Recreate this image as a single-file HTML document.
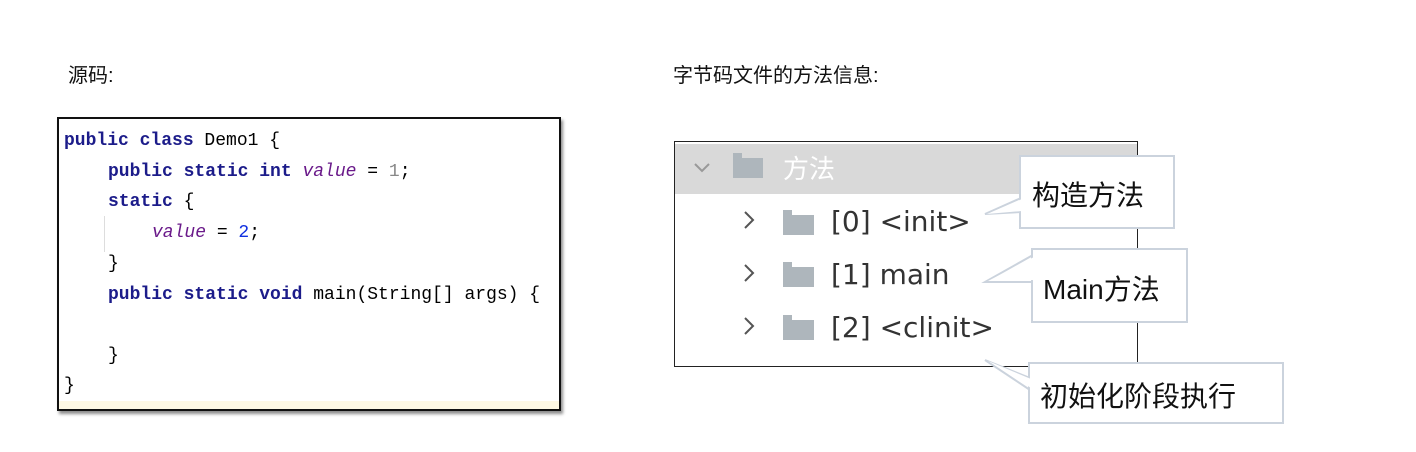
<!DOCTYPE html>
<html><head><meta charset="utf-8"><style>
body{margin:0;width:1416px;height:452px;background:#fff;position:relative;overflow:hidden;font-family:"Liberation Sans","Noto Sans CJK SC",sans-serif;}
.abs{position:absolute;}
.lbl{font-size:20px;color:#111;line-height:24px;}
.code{left:57px;top:117px;width:500px;height:290px;border:2px solid #111;box-shadow:2px 3px 3px rgba(0,0,0,.45);background:#fff;}
.ln{position:absolute;font-family:"Liberation Mono",monospace;font-size:18px;line-height:20px;white-space:pre;color:#000;}
.k{color:#1c1c8a;font-weight:bold;}
.v{color:#6a1a8a;font-style:italic;}
.n{color:#888;}
.b{color:#1030e0;}
.tree{left:674px;top:141px;width:462px;height:224px;border:1.5px solid #222;background:#fff;}
.hdr{left:0;top:2px;width:462px;height:50px;background:#d9d9d9;}
.row{position:absolute;font-size:28px;color:#333;line-height:32px;font-family:"DejaVu Sans","Noto Sans CJK SC",sans-serif;}
.fold{position:absolute;width:21px;height:18px;background:#aeb6bc;}
.fold:before{content:"";position:absolute;left:0;top:-5px;width:9px;height:5px;background:#aeb6bc;}
.co{position:absolute;border:2px solid #cbd3dd;background:#fff;font-size:28px;color:#111;font-family:"Liberation Sans","Noto Sans CJK SC",sans-serif;}
</style></head><body>
<div class="abs lbl" style="left:68px;top:64px;">源码:</div>
<div class="abs lbl" style="left:673px;top:64px;">字节码文件的方法信息:</div>

<div class="abs code">
<div style="position:absolute;left:0;bottom:0;width:500px;height:8px;background:#fdf8e4;"></div>
<div style="position:absolute;left:45px;top:97px;width:1px;height:36px;background:#ddd;"></div>
<div class="ln" style="left:5px;top:12px;"><span class="k">public class</span> Demo1 {</div>
<div class="ln" style="left:49px;top:43px;"><span class="k">public static int</span> <span class="v">value</span> = <span class="n">1</span>;</div>
<div class="ln" style="left:49px;top:73px;"><span class="k">static</span> {</div>
<div class="ln" style="left:93px;top:104px;"><span class="v">value</span> = <span class="b">2</span>;</div>
<div class="ln" style="left:49px;top:135px;">}</div>
<div class="ln" style="left:49px;top:166px;"><span class="k">public static void</span> main(String[] args) {</div>
<div class="ln" style="left:49px;top:227px;">}</div>
<div class="ln" style="left:5px;top:257px;">}</div>
</div>

<div class="abs tree">
<div class="abs hdr"></div>
<svg class="abs" style="left:18px;top:20px" width="18" height="12"><path d="M2 2 L9 9 L16 2" fill="none" stroke="#999" stroke-width="2"/></svg>
<div class="fold" style="left:58px;top:16px;width:30px;height:20px;"></div>
<div class="row" style="left:108px;top:10px;color:#fff;font-size:26px;font-family:'Noto Sans CJK SC',sans-serif;">方法</div>
<svg class="abs" style="left:68px;top:68px" width="12" height="20"><path d="M2 2 L10 10 L2 18" fill="none" stroke="#555" stroke-width="2"/></svg>
<div class="fold" style="left:108px;top:73px;width:31px;height:20px;"></div>
<div class="row" style="left:156px;top:64px;">[0] &lt;init&gt;</div>
<svg class="abs" style="left:68px;top:121px" width="12" height="20"><path d="M2 2 L10 10 L2 18" fill="none" stroke="#555" stroke-width="2"/></svg>
<div class="fold" style="left:108px;top:125px;width:31px;height:20px;"></div>
<div class="row" style="left:156px;top:117px;">[1] main</div>
<svg class="abs" style="left:68px;top:174px" width="12" height="20"><path d="M2 2 L10 10 L2 18" fill="none" stroke="#555" stroke-width="2"/></svg>
<div class="fold" style="left:108px;top:178px;width:31px;height:20px;"></div>
<div class="row" style="left:156px;top:170px;">[2] &lt;clinit&gt;</div>
</div>

<svg class="abs" style="left:0;top:0" width="1416" height="452">
<polygon points="1021,198 985,214 1021,212" fill="#fff" stroke="#cbd3dd" stroke-width="2"/>
<polygon points="1033,255 985,282 1033,282" fill="#fff" stroke="#cbd3dd" stroke-width="2"/>
<polygon points="1030,378 985,360 1030,390" fill="#fff" stroke="#cbd3dd" stroke-width="2"/>
</svg>
<div class="co" style="left:1019px;top:155px;width:152px;height:70px;"><span style="position:absolute;left:11px;top:17px;">构造方法</span></div>
<div class="co" style="left:1031px;top:248px;width:153px;height:71px;"><span style="position:absolute;left:10px;top:18px;">Main方法</span></div>
<div class="co" style="left:1028px;top:362px;width:252px;height:58px;"><span style="position:absolute;left:10px;top:11px;">初始化阶段执行</span></div>
<svg class="abs" style="left:0;top:0" width="1416" height="452">
<polygon points="1022,199 987,214 1022,211" fill="#fff"/>
<polygon points="1034,257 988,281 1034,280" fill="#fff"/>
<polygon points="1031,379 988,361 1031,388" fill="#fff"/>
</svg>
</body></html>
